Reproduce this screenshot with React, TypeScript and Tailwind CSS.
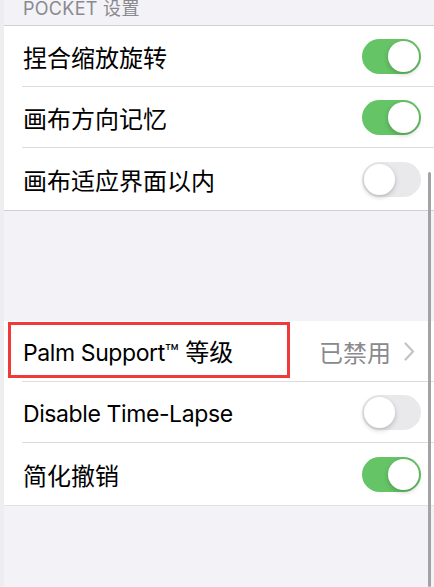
const font = { fontFamily: '"Inter", "Noto Sans CJK SC", sans-serif' }

function Toggle({ on }: { on: boolean }) {
  return (
    <div
      className={
        on
          ? "w-[59px] h-[35px] rounded-full bg-[#65c466] flex items-center justify-end px-[2px]"
          : "w-[59px] h-[35px] rounded-full bg-[#e9e9eb] flex items-center justify-start px-[2px]"
      }
    >
      <div className="w-[31px] h-[31px] rounded-full bg-white shadow-[0_2px_5px_rgba(0,0,0,0.22)]" />
    </div>
  )
}

function Row({ label, on, last, latin }: { label: string; on: boolean; last?: boolean; latin?: boolean }) {
  return (
    <div
      className={
        last
          ? "ml-[18px] pl-[1px] pr-[13px] h-[62px] flex items-center justify-between"
          : "ml-[18px] pl-[1px] pr-[13px] h-[61px] flex items-center justify-between border-b border-[#dcdce0]"
      }
    >
      <span
        className={
          latin
            ? "text-[23px] tracking-[-0.4px] text-black leading-none translate-y-[2px]"
            : "text-[24px] text-black leading-none translate-y-[3px]"
        }
      >
        {label}
      </span>
      <Toggle on={on} />
    </div>
  )
}

function Chevron() {
  return (
    <svg width="11" height="19" viewBox="0 0 11 19" fill="none">
      <path d="M1.5 1.5 L9 9.5 L1.5 17.5" stroke="#c4c4c7" strokeWidth="2.2" strokeLinecap="round" strokeLinejoin="round" />
    </svg>
  )
}

export default function App() {
  return (
    <div className="relative w-[434px] h-[587px] overflow-hidden bg-[#f2f2f7] flex" style={font}>
      <div className="w-[4px] bg-[#eeeef0]" />
      <div className="flex-1 flex flex-col">
        <div className="h-[26px] -mx-[4px] pl-[23px] text-[18px] tracking-[0.3px] leading-[20px] text-[#8a8a8e] -mt-[1px]">
          POCKET 设置
        </div>

        <div className="bg-white border-t border-b border-[#cfcfd4]">
          <Row label="捏合缩放旋转" on />
          <Row label="画布方向记忆" on />
          <Row label="画布适应界面以内" on={false} last />
        </div>

        <div className="h-[110px]" />

        <div className="bg-white border-b border-[#e2e2e6]">
          <div className="ml-[18px] pl-[1px] pr-[19px] h-[61px] flex items-center justify-between border-b border-[#dcdce0]">
            <span className="text-[24px] text-black leading-none translate-y-[2px]">
              <span className="text-[23px] tracking-[-0.4px]">Palm Support™</span> 等级
            </span>
            <div className="flex items-center gap-[13px]">
              <span className="text-[24px] text-[#8a8a8e] leading-none translate-y-[3px]">已禁用</span>
              <Chevron />
            </div>
          </div>
          <Row label="Disable Time-Lapse" on={false} latin />
          <Row label="简化撤销" on last />
        </div>
      </div>

      <div className="absolute left-[8px] top-[322px] w-[282px] h-[56px] border-[3px] border-[#f03a3a]" />
      <div className="absolute left-[428px] top-[172px] bottom-0 w-[3px] rounded-full bg-[#a3a3a6]" />
    </div>
  )
}
